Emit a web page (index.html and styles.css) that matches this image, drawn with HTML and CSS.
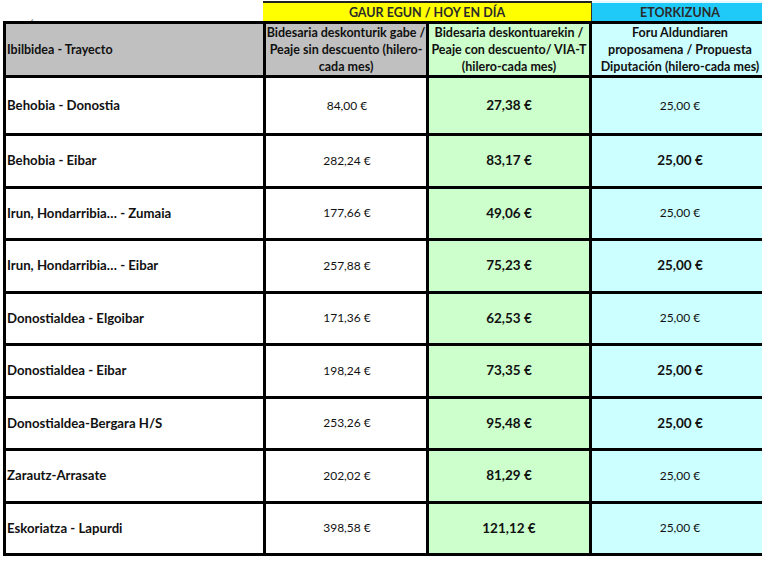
FILE: index.html
```html
<!DOCTYPE html>
<html lang="eu">
<head>
<meta charset="utf-8">
<title>Bidesariak</title>
<link rel="stylesheet" href="styles.css">
</head>
<body>
<div class="sheet">
  <div class="band blank"><span class="tick">ˏ</span></div>
  <div class="band today">GAUR EGUN / HOY EN DÍA</div>
  <div class="band future">ETORKIZUNA</div>

  <div class="hd route">Ibilbidea - Trayecto</div>
  <div class="hd gray">Bidesaria deskonturik gabe /<br>Peaje sin descuento (hilero-<br>cada mes)</div>
  <div class="hd green">Bidesaria deskontuarekin /<br>Peaje con descuento/ VIA-T<br>(hilero-cada mes)</div>
  <div class="hd cyan">Foru Aldundiaren<br>proposamena / Propuesta<br>Diputación (hilero-cada mes)</div>

  <div class="c route first">Behobia - Donostia</div>
  <div class="c plain first">84,00 €</div>
  <div class="c green first">27,38 €</div>
  <div class="c cyan light first">25,00 €</div>

  <div class="c route">Behobia - Eibar</div>
  <div class="c plain">282,24 €</div>
  <div class="c green">83,17 €</div>
  <div class="c cyan">25,00 €</div>

  <div class="c route">Irun, Hondarribia… - Zumaia</div>
  <div class="c plain">177,66 €</div>
  <div class="c green">49,06 €</div>
  <div class="c cyan light">25,00 €</div>

  <div class="c route">Irun, Hondarribia… - Eibar</div>
  <div class="c plain">257,88 €</div>
  <div class="c green">75,23 €</div>
  <div class="c cyan">25,00 €</div>

  <div class="c route">Donostialdea - Elgoibar</div>
  <div class="c plain">171,36 €</div>
  <div class="c green">62,53 €</div>
  <div class="c cyan light">25,00 €</div>

  <div class="c route">Donostialdea - Eibar</div>
  <div class="c plain">198,24 €</div>
  <div class="c green">73,35 €</div>
  <div class="c cyan">25,00 €</div>

  <div class="c route">Donostialdea-Bergara H/S</div>
  <div class="c plain">253,26 €</div>
  <div class="c green">95,48 €</div>
  <div class="c cyan">25,00 €</div>

  <div class="c route">Zarautz-Arrasate</div>
  <div class="c plain">202,02 €</div>
  <div class="c green">81,29 €</div>
  <div class="c cyan light">25,00 €</div>

  <div class="c route">Eskoriatza - Lapurdi</div>
  <div class="c plain">398,58 €</div>
  <div class="c green">121,12 €</div>
  <div class="c cyan light">25,00 €</div>
</div>
</body>
</html>
```

FILE: styles.css
```css
html, body {
  margin: 0;
  padding: 0;
  background: #ffffff;
  overflow: hidden;
}

body {
  width: 762px;
  height: 564px;
  font-family: Lato, "Open Sans", "Liberation Sans", sans-serif;
  color: #111;
}

.sheet {
  display: grid;
  grid-template-columns: 263px 163px 163px 176px;
  grid-template-rows: 20px 57px 58px repeat(8, 52.5px);
  margin: 1px 0 0 0;
  padding-left: 3px;
}

.sheet > div {
  box-sizing: border-box;
  display: flex;
  align-items: center;
  white-space: nowrap;
  overflow: hidden;
}

/* top band */
.band {
  font-size: 12.5px;
  font-weight: 700;
  justify-content: center;
  color: #2b2b2b;
  padding-top: 1px;
}

.band.blank {
  justify-content: flex-start;
  align-items: flex-start;
}

.tick {
  font-size: 11px;
  font-weight: 400;
  color: #444;
  margin: 6px 0 0 27px;
}

.band.today {
  grid-column: 2 / span 2;
  margin-left: -3px;
  background: #ffff00;
  border-top: 2px solid #222;
  border-right: 1px solid #333;
}

.band.future {
  background: #1fcaf8;
  border-top: 2px solid #e6f8ff;
}

/* header row */
.hd {
  font-size: 12.5px;
  font-weight: 700;
  line-height: 17px;
  background: #c0c0c0;
  border-top: 3px solid #000;
  border-bottom: 3px solid #000;
  border-right: 3px solid #000;
  justify-content: center;
  text-align: center;
}

.hd.route {
  justify-content: flex-start;
  border-left: 3px solid #000;
  padding-left: 1px;
}

.hd.green {
  background: #ccffcc;
}

.hd.cyan {
  background: #ccffff;
  border-right: none;
}

/* body cells */
.c {
  border-bottom: 3px solid #000;
  border-right: 3px solid #000;
  justify-content: center;
  font-size: 13.5px;
  font-weight: 700;
  padding-bottom: 1px;
}

.c.route {
  justify-content: flex-start;
  border-left: 3px solid #000;
  padding-left: 1px;
  font-size: 13.2px;
}

.c.plain {
  font-size: 12px;
  font-weight: 400;
  padding-left: 2px;
}

.c.green {
  background: #ccffcc;
}

.c.cyan {
  background: #ccffff;
  border-right: none;
}

.c.cyan.light {
  font-size: 12px;
  font-weight: 400;
}
```
